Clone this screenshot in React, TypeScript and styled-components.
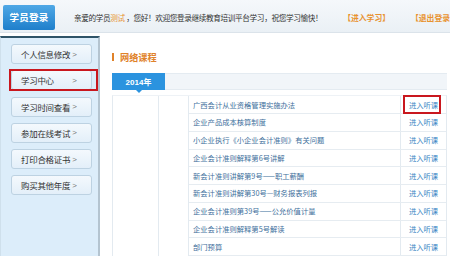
import React from "react";
import styled, { createGlobalStyle } from "styled-components";

const Global = createGlobalStyle`
  html, body { margin: 0; padding: 0; background: #fff; }
  body { width: 450px; height: 256px; overflow: hidden; font-family: "Noto Sans CJK SC", "Noto Sans", sans-serif; }
  * { box-sizing: border-box; }
`;

const Page = styled.div`
  width: 450px;
  height: 256px;
  display: flex;
  flex-direction: column;
  overflow: hidden;
`;

const Header = styled.div`
  height: 33px;
  flex: none;
  display: flex;
  align-items: center;
  padding-left: 3px;
  overflow: hidden;
  background: linear-gradient(#f5f8fb, #eaf0f5);
  border-bottom: 1px solid #dbe3ea;
`;

const Logo = styled.div`
  width: 52px;
  height: 25px;
  flex: none;
  margin-top: 2px;
  border-radius: 2px;
  background: linear-gradient(#4fa8e6, #1f7fcb);
  color: #fff;
  font-size: 9.5px;
  font-weight: bold;
  white-space: nowrap;
  display: flex;
  align-items: center;
  justify-content: center;
  letter-spacing: 0.2px;
`;

const Welcome = styled.div`
  flex: none;
  margin-left: 19px;
  font-size: 7.65px;
  letter-spacing: -0.38px;
  color: #333;
  white-space: nowrap;
  margin-top: 2px;
`;

const Name = styled.span`
  color: #e8922f;
`;

const HeadLink = styled.span<{ $ml: number }>`
  flex: none;
  margin-left: ${(p) => p.$ml}px;
  font-size: 7.8px;
  font-weight: bold;
  color: #e8922f;
  white-space: nowrap;
  margin-top: 2px;
`;

const Body = styled.div`
  flex: 1;
  display: flex;
  margin-top: 3px;
  min-height: 0;
`;

const Sidebar = styled.div`
  width: 100px;
  flex: none;
  background: #dcedfa;
  border-top: 2px solid #2f5468;
  border-left: 1px solid #cfe0ec;
  border-right: 2px solid #b4c4d0;
  padding: 6px 0 0 10px;
  display: flex;
  flex-direction: column;
  gap: 6.3px;
`;

const NavButton = styled.div<{ $active?: boolean }>`
  position: relative;
  width: 81px;
  height: 20px;
  flex: none;
  border: 1px solid #bdd2e2;
  border-radius: 3px;
  background: linear-gradient(#f4f9fd, #e3eff9);
  display: flex;
  align-items: center;
  padding: 0 14px 0 9px;
  font-size: 8.5px;
  letter-spacing: -0.3px;
  color: #333;
  white-space: nowrap;
  &::after {
    content: "";
    display: ${(p) => (p.$active ? "block" : "none")};
    position: absolute;
    left: -3px;
    right: -7px;
    top: -2px;
    bottom: -2px;
    border: 2px solid #c9171e;
  }
`;

const Arrow = styled.span`
  margin-left: auto;
  color: #777;
  font-size: 8px;
  letter-spacing: 0;
  font-family: "Liberation Sans", sans-serif;
`;

const Main = styled.div`
  flex: 1;
  padding: 16px 3px 0 12px;
  display: flex;
  flex-direction: column;
  min-width: 0;
`;

const SectionTitle = styled.div`
  display: flex;
  align-items: center;
  gap: 6px;
  height: 9px;
  font-size: 9.2px;
  font-weight: bold;
  color: #e0822a;
  &::before {
    content: "";
    width: 2px;
    height: 8px;
    background: #e0822a;
  }
`;

const TabBar = styled.div`
  margin-top: 12px;
  height: 18px;
  display: flex;
  background: #f1f5f9;
  border-top: 1px solid #e4ebf1;
  border-bottom: 1px solid #e4ebf1;
`;

const Tab = styled.div`
  position: relative;
  width: 53px;
  margin: -1px 0;
  background: #2b93df;
  color: #fff;
  font-size: 8px;
  font-weight: bold;
  font-family: "Liberation Sans", "Noto Sans CJK SC", sans-serif;
  display: flex;
  align-items: center;
  justify-content: center;
  &::after {
    content: "";
    position: absolute;
    left: 50%;
    bottom: -3px;
    margin-left: -3px;
    border-left: 3px solid transparent;
    border-right: 3px solid transparent;
    border-top: 3px solid #2b93df;
  }
`;

const Table = styled.div`
  margin-top: 5px;
  flex: 1;
  display: flex;
  width: 335px;
  border-left: 1px solid #e3eaf0;
  border-right: 1px solid #e3eaf0;
  border-top: 1px solid #eef2f6;
`;

const EmptyCol = styled.div<{ $w: number }>`
  width: ${(p) => p.$w}px;
  flex: none;
  border-right: 1px solid #e3eaf0;
`;

const Rows = styled.div`
  flex: 1;
  display: flex;
  flex-direction: column;
`;

const Row = styled.div`
  height: 17.75px;
  flex: none;
  display: grid;
  grid-template-columns: 212px 1fr;
  border-bottom: 1px solid #e6ecf1;
`;

const Title = styled.div`
  display: flex;
  align-items: center;
  padding-left: 4px;
  font-size: 7.3px;
  color: #3e6f9c;
  white-space: nowrap;
  overflow: hidden;
  border-right: 1px solid #e3eaf0;
`;

const Enter = styled.div<{ $active?: boolean }>`
  position: relative;
  display: flex;
  align-items: center;
  justify-content: center;
  font-size: 7.3px;
  color: #3a86c4;
  white-space: nowrap;
  &::after {
    content: "";
    display: ${(p) => (p.$active ? "block" : "none")};
    position: absolute;
    left: 2px;
    right: 5px;
    top: -1px;
    bottom: -1px;
    border: 2px solid #c9171e;
  }
`;

const nav = ["个人信息修改", "学习中心", "学习时间查看", "参加在线考试", "打印合格证书", "购买其他年度"];

const courses = [
  "广西会计从业资格管理实施办法",
  "企业产品成本核算制度",
  "小企业执行《小企业会计准则》有关问题",
  "企业会计准则解释第6号讲解",
  "新会计准则讲解第9号——职工薪酬",
  "新会计准则讲解第30号—财务报表列报",
  "企业会计准则第39号——公允价值计量",
  "企业会计准则解释第5号解读",
  "部门预算",
];

export default function App() {
  return (
    <Page>
      <Global />
      <Header>
        <Logo>学员登录</Logo>
        <Welcome>
          亲爱的学员<Name>测试</Name> ，您好！欢迎您登录继续教育培训平台学习，祝您学习愉快！
        </Welcome>
        <HeadLink $ml={21}>【进入学习】</HeadLink>
        <HeadLink $ml={21}>【退出登录】</HeadLink>
      </Header>
      <Body>
        <Sidebar>
          {nav.map((n, i) => (
            <NavButton key={n} $active={i === 1}>
              <span>{n}</span>
              <Arrow>&gt;</Arrow>
            </NavButton>
          ))}
        </Sidebar>
        <Main>
          <SectionTitle>网络课程</SectionTitle>
          <TabBar>
            <Tab>2014年</Tab>
          </TabBar>
          <Table>
            <EmptyCol $w={46} />
            <EmptyCol $w={30} />
            <Rows>
              {courses.map((c, i) => (
                <Row key={c}>
                  <Title>{c}</Title>
                  <Enter $active={i === 0}>进入听课</Enter>
                </Row>
              ))}
            </Rows>
          </Table>
        </Main>
      </Body>
    </Page>
  );
}
